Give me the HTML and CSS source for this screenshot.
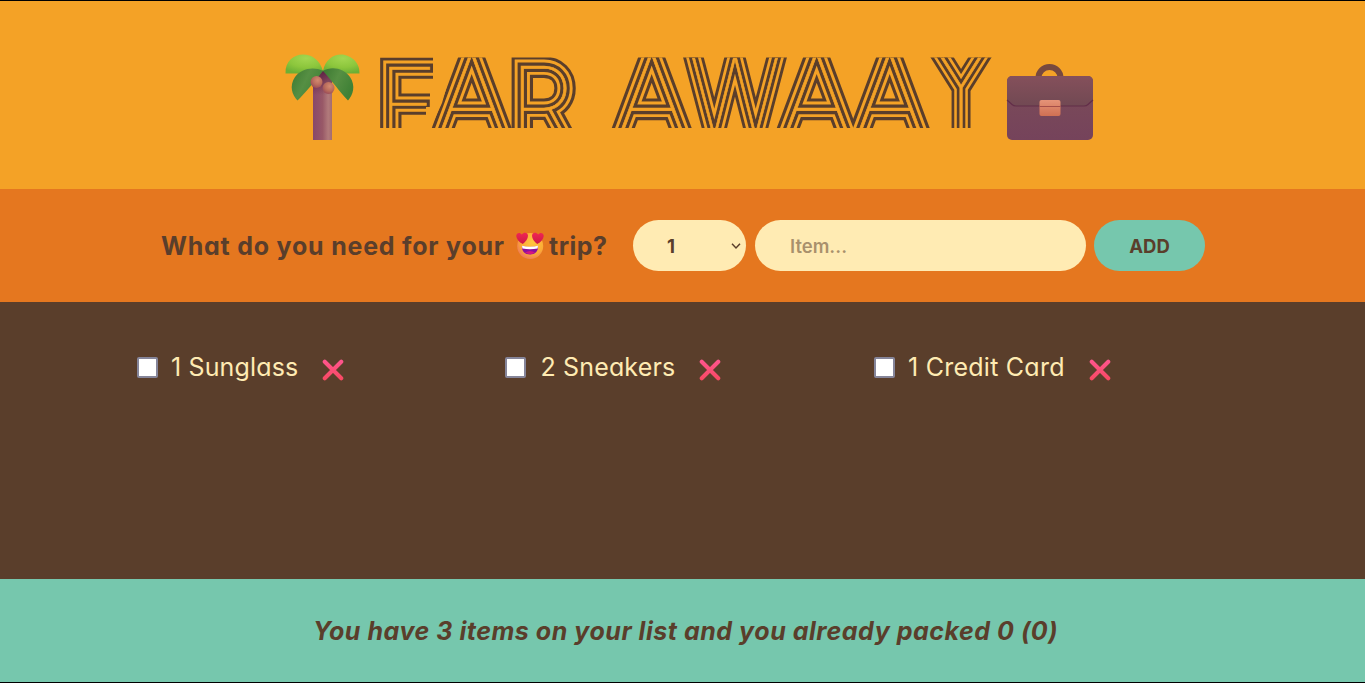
FILE: index.html
```html
<!DOCTYPE html>
<html lang="en">
<head>
<meta charset="utf-8">
<title>Far Awaay</title>
<link rel="stylesheet" href="styles.css">
</head>
<body>
<svg class="defs" width="0" height="0" aria-hidden="true">
  <defs>
    <linearGradient id="xg" gradientUnits="userSpaceOnUse" x1="0" y1="0" x2="0" y2="20"><stop offset="0" stop-color="#ff5691"/><stop offset="1" stop-color="#f8485f"/></linearGradient>
    <symbol id="cross" viewBox="0 0 20 20"><path d="M2.500 2.500L17.500 17.500M17.500 2.500L2.500 17.500" fill="none" stroke="url(#xg)" stroke-width="3.700" stroke-linecap="round"/></symbol>
  </defs>
</svg>
<div class="app">
  <header class="hero">
    <svg class="palm" viewBox="0 0 76 88" width="76" height="88" aria-hidden="true">
      <defs>
        <linearGradient id="trunk"><stop offset="0" stop-color="#87486a"/><stop offset=".5" stop-color="#985867"/><stop offset=".8" stop-color="#b17a7b"/><stop offset="1" stop-color="#a46c70"/></linearGradient>
        <radialGradient id="leafA" cx=".55" cy=".2" r=".8"><stop offset="0" stop-color="#a3d650"/><stop offset=".6" stop-color="#8cc63c"/><stop offset="1" stop-color="#6caf35"/></radialGradient>
        <linearGradient id="leafB" x1="0" x2="1" y1="0" y2=".5"><stop offset="0" stop-color="#3b7831"/><stop offset=".5" stop-color="#568f43"/><stop offset="1" stop-color="#3f8136"/></linearGradient>
        <radialGradient id="nut" cx=".6" cy=".35" r=".65"><stop offset="0" stop-color="#d48a70"/><stop offset=".6" stop-color="#ba6d5c"/><stop offset="1" stop-color="#9e4f58"/></radialGradient>
        <linearGradient id="shade" x1="0" x2="0" y1="0" y2="1"><stop offset="0" stop-color="#5b1f43"/><stop offset="1" stop-color="#5b1f43" stop-opacity="0"/></linearGradient>
      </defs>
      <path d="M28 24l10-7 9 8v62H28z" fill="url(#trunk)"/>
      <path d="M28 24l10-7 9 8v17H28z" fill="url(#shade)"/>
      <path d="M.5 20.500C0 8 9 1.500 18 1.500S35 7 38 18c-8 0-14 2.500-22 2.500z" fill="url(#leafA)"/>
      <path d="M38 18C40 7 48 1.500 56 1.500S75 8 74.500 20.500H60C52 20.500 46 18 38 18z" fill="url(#leafA)"/>
      <path d="M38 18C28 13 16 16 10 24c-6 9-3 18 2.500 23.500C20 40 26 33 38 18z" fill="url(#leafB)"/>
      <path d="M38 18C46 13 59 15 65 24c6 9 3 18-2 23.500C54 38 48 29 38 18z" fill="url(#leafB)"/>
      <circle cx="31.500" cy="29" r="6" fill="url(#nut)"/>
      <circle cx="43.500" cy="35" r="6" fill="url(#nut)"/>
    </svg>
    <h1 class="logo">
      <svg viewBox="376 50 622 86" width="622" height="86" role="img" aria-label="Far Awaay">
        <defs>
          <clipPath id="band"><path d="M370 57.500H433V80H430V107H426V128H370zM455 57.500H1000V128H431.500V126L442 103z"/></clipPath>
        </defs>
        <g clip-path="url(#band)">
          <g id="word" class="word">
            <text><tspan x="378" y="142" font-size="103">F</tspan><tspan x="434" y="139" font-size="118">A</tspan><tspan x="509" y="144" font-size="107">R</tspan></text>
            <text x="614" y="139" font-size="118">A</text>
            <text transform="translate(735 135) scale(.93 1)" text-anchor="middle" font-size="106">W</text>
            <text><tspan x="779" y="139" font-size="118">A</tspan><tspan x="852" y="139" font-size="118">A</tspan></text>
            <text transform="translate(961 130) scale(.87 1)" text-anchor="middle" font-size="122">Y</text>
          </g>
          <use href="#word" class="ring ring-a"/>
          <use href="#word" class="ring ring-b"/>
          <use href="#word" class="ring ring-c"/>
          <use href="#word" class="ring ring-d"/>
        </g>
      </svg>
    </h1>
    <svg class="bag" viewBox="0 0 88 78" width="88" height="78" aria-hidden="true">
      <defs>
        <linearGradient id="bagTop" x1="0" x2="0" y1="0" y2="1"><stop offset="0" stop-color="#85505b"/><stop offset="1" stop-color="#714953"/></linearGradient>
        <linearGradient id="bagLow" x1="0" x2="0" y1="0" y2="1"><stop offset="0" stop-color="#7c4c58"/><stop offset="1" stop-color="#75435b"/></linearGradient>
        <linearGradient id="clasp" x1="0" x2="0" y1="0" y2="1"><stop offset="0" stop-color="#e59378"/><stop offset="1" stop-color="#cf7053"/></linearGradient>
      </defs>
      <path d="M32.500 15a11 11 0 0 1 22 0" fill="none" stroke="#77493f" stroke-width="6"/>
      <rect x="1" y="13" width="86" height="64" rx="5" fill="url(#bagLow)"/>
      <path d="M1 37V18a5 5 0 0 1 5-5h76a5 5 0 0 1 5 5v19l-5 4.500q-1.500 1.500-4 1.500H10q-2.500 0-4-1.500z" fill="url(#bagTop)"/>
      <path d="M1 37l5 4.500q1.500 1.500 4 1.500h68q2.500 0 4-1.500l5-4.500" fill="none" stroke="#632e49" stroke-width="1.200"/>
      <rect x="33.500" y="37" width="21" height="16" rx="2" fill="url(#clasp)"/>
      <path d="M33.500 43.500h21" stroke="#a64f49"/>
    </svg>
  </header>

  <form class="add-form">
    <h3 class="question"><span class="q-main">What do you need for your</span>
      <svg class="face" viewBox="0 0 28 28" width="28" height="28" aria-hidden="true">
        <defs>
          <radialGradient id="skin" cx=".6" cy=".35" r=".75"><stop offset="0" stop-color="#ffc740"/><stop offset=".6" stop-color="#fbaa36"/><stop offset="1" stop-color="#ed6b62"/></radialGradient>
          <linearGradient id="heart" x1="0" x2="0" y1="0" y2="1"><stop offset="0" stop-color="#ef2752"/><stop offset="1" stop-color="#cf1747"/></linearGradient>
        </defs>
        <circle cx="14.200" cy="14" r="13" fill="url(#skin)"/>
        <path d="M6 14q8 2 16 0c.5 5-3 8.500-8 8.500S5.500 19 6 14z" fill="#8d109d"/>
        <path d="M6 13.800q8 1.800 16 0l-.4 2.700q-7.600 1.300-15.200 0z" fill="#fff"/>
        <path d="M9 20.500q5-3 10 0-4 3.500-10 0z" fill="#d51583"/>
        <path d="M6.800 12C3 10 .5 7 .3 4.200-.1.700 4.200-.3 5.800 2.600 7.800-.3 12 .3 12 3.700c0 3-2.500 6.200-5.200 8.300z" fill="url(#heart)"/>
        <path d="M21.200 12c3.800-2 6.300-5 6.500-7.800.4-3.500-3.900-4.500-5.500-1.600C20.200-.3 16 .3 16 3.700c0 3 2.500 6.200 5.200 8.300z" fill="url(#heart)"/>
      </svg>
      <span class="q-end">trip?</span></h3>
    <div class="field qty"><span>1</span>
      <svg viewBox="0 0 10 6" width="10" height="6" aria-hidden="true"><path d="M1 .8l4 4.100L9 .8" fill="none" stroke="currentColor" stroke-width="1.500"/></svg>
    </div>
    <input class="field item" type="text" placeholder="Item...">
    <button class="field add" type="button">ADD</button>
  </form>

  <main class="list">
    <ul>
      <li><input type="checkbox"><span>1 Sunglass</span><svg class="x" width="22" height="22"><use href="#cross"/></svg></li>
      <li><input type="checkbox"><span>2 Sneakers</span><svg class="x" width="22" height="22"><use href="#cross"/></svg></li>
      <li><input type="checkbox"><span>1 Credit Card</span><svg class="x" width="22" height="22"><use href="#cross"/></svg></li>
    </ul>
  </main>

  <footer class="stats"><em>You have 3 items on your list and you already packed 0 (0)</em></footer>
</div>
</body>
</html>
```

FILE: styles.css
```css
* { box-sizing: border-box; margin: 0; padding: 0; }
body {
  background: #000;
  color: #5a3e2b;
  font-family: Inter, "Open Sans", sans-serif;
  font-feature-settings: "cv11";
  height: 683px;
  overflow: hidden;
}
.defs { position: absolute; }
.app {
  height: 683px;
  padding: 1px 0;
  display: grid;
  grid-template-rows: 188px 113px 277px 103px;
}
.hero {
  background: #f4a226;
  display: flex;
  align-items: flex-start;
  padding: 49px 0 0 285px;
}
.palm { margin-top: 3px; flex: none; }
.logo { margin-left: 15px; height: 86px; flex: none; }
.logo svg { display: block; }
.bag { margin: 13px 0 0 8px; flex: none; }
.word { font-family: Inter, Lato, sans-serif; font-weight: 100; stroke-linejoin: miter; stroke-miterlimit: 8; }
.ring-a { fill: #5a3e2b; stroke: #5a3e2b; stroke-width: 19px; }
.ring-b { fill: #f4a226; stroke: #f4a226; stroke-width: 12.800px; }
.ring-c { fill: #5a3e2b; stroke: #5a3e2b; stroke-width: 7px; }
.ring-d { fill: #f4a226; stroke: #f4a226; stroke-width: .7px; }

.add-form {
  background: #e5771f;
  display: flex;
  align-items: center;
  padding-left: 161px;
}
.question {
  display: flex;
  align-items: center;
  width: 472px;
  font-size: 25px;
  font-weight: 650;
  letter-spacing: .78px;
  white-space: nowrap;
}
.q-main { width: 355px; }
.q-end { letter-spacing: .5px; }
.face { margin-right: 5px; }
.field {
  height: 51px;
  border: 0;
  border-radius: 26px;
  background: #ffebb3;
  color: #5a3e2b;
  font: 600 18.500px Inter, sans-serif;
}
.qty {
  width: 113px;
  display: flex;
  align-items: center;
  justify-content: space-between;
  padding: 0 5px 0 34px;
  font-weight: 700;
}
.item { width: 331px; margin: 0 8px 0 9px; padding: 0 35px; }
.item::placeholder { color: #5a3e2b; opacity: .52; }
.add { width: 111px; background: #76c7ad; font-weight: 700; }

.list { background: #5a3e2b; color: #ffebb3; padding: 48px 0 0 137px; }
.list ul { list-style: none; display: grid; grid-template-columns: repeat(3, 368.500px); }
.list li { display: flex; align-items: center; height: 34px; font-size: 25px; letter-spacing: .15px; }
.list li:nth-child(2) { margin-left: -1px; }
.list li:nth-child(3) { letter-spacing: .25px; }
.list input {
  appearance: none;
  width: 21px;
  height: 21px;
  margin-right: 13px;
  border: 2px solid #85859a;
  border-radius: 2px;
  background: #fff;
}
.list li:nth-child(2) input { margin-right: 15px; }
.x { margin: 6px 0 0 24px; }

.stats {
  background: #76c7ad;
  display: flex;
  align-items: center;
  justify-content: center;
  font-size: 25px;
  font-weight: 650;
  letter-spacing: .54px;
  padding-left: 6px;
}
```
